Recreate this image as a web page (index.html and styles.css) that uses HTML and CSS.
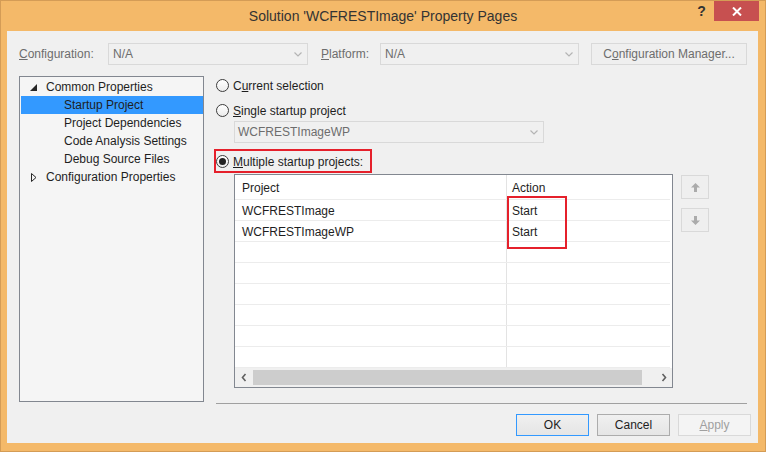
FILE: index.html
```html
<!DOCTYPE html>
<html lang="en">
<head>
    <meta charset="UTF-8">
    <title>Solution 'WCFRESTImage' Property Pages</title>
    <link rel="stylesheet" href="styles.css">
</head>
<body>
    <div class="window">
        <div class="titlebar">
            <div class="title">Solution 'WCFRESTImage' Property Pages</div>
            <div class="caption-buttons">
                <div class="help-btn">?</div>
                <div class="close-btn">
                    <svg width="10" height="9" viewBox="0 0 10 9"><path d="M1 0.5 L9 8.5 M9 0.5 L1 8.5" stroke="#fff" stroke-width="2" fill="none"/></svg>
                </div>
            </div>
        </div>

        <div class="client">
            <div class="config-row">
                <div class="field-label label-config"><u>C</u>onfiguration:</div>
                <div class="combo combo-config">
                    <span>N/A</span>
                    <svg class="chevron" width="8" height="5" viewBox="0 0 8 5"><path d="M0.5 0.5 L4 4 L7.5 0.5" stroke="#b4b4b4" stroke-width="1.2" fill="none"/></svg>
                </div>
                <div class="field-label label-platform"><u>P</u>latform:</div>
                <div class="combo combo-platform">
                    <span>N/A</span>
                    <svg class="chevron" width="8" height="5" viewBox="0 0 8 5"><path d="M0.5 0.5 L4 4 L7.5 0.5" stroke="#b4b4b4" stroke-width="1.2" fill="none"/></svg>
                </div>
                <button type="button" class="btn btn-manager" disabled>C<u>o</u>nfiguration Manager...</button>
            </div>

            <div class="body">
                <div class="tree">
                    <div class="tree-item">
                        <span class="expander">
                            <svg width="7" height="7" viewBox="0 0 7 7"><path d="M7 0 L7 7 L0 7 Z" fill="#262626"/></svg>
                        </span>
                        <span>Common Properties</span>
                    </div>
                    <div class="tree-item child selected">Startup Project</div>
                    <div class="tree-item child">Project Dependencies</div>
                    <div class="tree-item child">Code Analysis Settings</div>
                    <div class="tree-item child">Debug Source Files</div>
                    <div class="tree-item">
                        <span class="expander collapsed">
                            <svg width="6" height="9" viewBox="0 0 6 9"><path d="M0.5 0.5 L5 4.5 L0.5 8.5 Z" fill="none" stroke="#262626"/></svg>
                        </span>
                        <span>Configuration Properties</span>
                    </div>
                </div>

                <div class="page">
                    <div class="radio-row">
                        <span class="radio"></span>
                        <span class="radio-text">C<u>u</u>rrent selection</span>
                    </div>
                    <div class="radio-row second">
                        <span class="radio"></span>
                        <span class="radio-text"><u>S</u>ingle startup project</span>
                    </div>
                    <div class="combo combo-project">
                        <span>WCFRESTImageWP</span>
                        <svg class="chevron" width="8" height="5" viewBox="0 0 8 5"><path d="M0.5 0.5 L4 4 L7.5 0.5" stroke="#b4b4b4" stroke-width="1.2" fill="none"/></svg>
                    </div>
                    <div class="radio-row marked">
                        <span class="radio checked"></span>
                        <span class="radio-text"><u>M</u>ultiple startup projects:</span>
                    </div>

                    <div class="grid-row">
                        <div class="grid">
                            <div class="grid-line grid-header">
                                <div class="cell col-project">Project</div>
                                <div class="cell col-action">Action</div>
                            </div>
                            <div class="grid-line">
                                <div class="cell col-project">WCFRESTImage</div>
                                <div class="cell col-action">Start</div>
                            </div>
                            <div class="grid-line">
                                <div class="cell col-project">WCFRESTImageWP</div>
                                <div class="cell col-action">Start</div>
                            </div>
                            <div class="grid-line"><div class="cell col-project"></div><div class="cell col-action"></div></div>
                            <div class="grid-line"><div class="cell col-project"></div><div class="cell col-action"></div></div>
                            <div class="grid-line"><div class="cell col-project"></div><div class="cell col-action"></div></div>
                            <div class="grid-line"><div class="cell col-project"></div><div class="cell col-action"></div></div>
                            <div class="grid-line"><div class="cell col-project"></div><div class="cell col-action"></div></div>
                            <div class="grid-line"><div class="cell col-project"></div><div class="cell col-action"></div></div>

                            <div class="hscroll">
                                <div class="scroll-arrow">
                                    <svg width="6" height="9" viewBox="0 0 6 9"><path d="M4.5 1 L1.5 4.5 L4.5 8" stroke="#606060" stroke-width="1.6" fill="none"/></svg>
                                </div>
                                <div class="scroll-thumb"></div>
                                <div class="scroll-track"></div>
                                <div class="scroll-arrow">
                                    <svg width="6" height="9" viewBox="0 0 6 9"><path d="M1.5 1 L4.5 4.5 L1.5 8" stroke="#606060" stroke-width="1.6" fill="none"/></svg>
                                </div>
                            </div>

                            <div class="start-mark"></div>
                        </div>

                        <div class="move-buttons">
                            <div class="move-btn">
                                <svg width="9" height="9" viewBox="0 0 9 9"><path d="M4.5 0 L9 4.5 H6 V9 H3 V4.5 H0 Z" fill="#ababab"/></svg>
                            </div>
                            <div class="move-btn">
                                <svg width="9" height="9" viewBox="0 0 9 9"><path d="M4.5 9 L9 4.5 H6 V0 H3 V4.5 H0 Z" fill="#ababab"/></svg>
                            </div>
                        </div>
                    </div>
                </div>
            </div>

            <div class="footer">
                <button type="button" class="btn btn-default">OK</button>
                <button type="button" class="btn">Cancel</button>
                <button type="button" class="btn" disabled><u>A</u>pply</button>
            </div>
        </div>
    </div>
</body>
</html>
```

FILE: styles.css
```css
* {
    box-sizing: border-box;
}

body {
    margin: 0;
    font-family: "Liberation Sans", Arial, sans-serif;
    font-size: 12px;
    color: #1e1e1e;
}

.window {
    width: 766px;
    height: 452px;
    border: 1px solid #d49c56;
    background: #f4b969;
    display: flex;
    flex-direction: column;
}

/* title bar */

.titlebar {
    height: 30px;
    display: flex;
    flex-shrink: 0;
}

.title {
    flex: 1;
    padding-left: 72px;
    text-align: center;
    line-height: 30px;
    font-size: 14px;
    color: #333;
}

.caption-buttons {
    display: flex;
    align-items: flex-start;
    margin-right: 6px;
}

.help-btn {
    width: 21px;
    height: 20px;
    line-height: 20px;
    padding-right: 4px;
    text-align: center;
    font-size: 14px;
    font-weight: bold;
    color: #333;
}

.close-btn {
    width: 45px;
    height: 20px;
    background: #c75050;
    display: flex;
    align-items: center;
    justify-content: center;
}

/* client area */

.client {
    height: 412px;
    margin: 0 7px 0 6px;
    background: #f0f0f0;
    display: flex;
    flex-direction: column;
}

.config-row {
    display: flex;
    align-items: center;
    padding: 12px 0 0 12px;
}

.field-label {
    color: #6d6d6d;
    height: 22px;
    line-height: 22px;
}

.label-config {
    width: 89px;
}

.label-platform {
    width: 59px;
    margin-left: 13px;
}

.combo {
    height: 22px;
    border: 1px solid #d9d9d9;
    background: #f0f0f0;
    color: #6d6d6d;
    display: flex;
    align-items: center;
    justify-content: space-between;
    padding: 0 5px 0 4px;
}

.combo-config {
    width: 200px;
}

.combo-platform {
    width: 199px;
}

.combo-project {
    width: 310px;
    margin: 2px 0 0 18px;
    padding-left: 3px;
}

.btn {
    font-family: inherit;
    font-size: 12px;
    color: #1e1e1e;
    height: 22px;
    width: 73px;
    padding: 0;
    border: 1px solid #acacac;
    background: linear-gradient(#f0f0f0, #e5e5e5);
}

.btn:disabled {
    border-color: #d9d9d9;
    background: #f4f4f4;
    color: #a0a0a0;
}

.btn-manager {
    width: 156px;
    margin-left: 12px;
}

.btn-manager:disabled {
    color: #6d6d6d;
    background: #efefef;
}

.btn-default {
    border-color: #3399ff;
}

/* main body */

.body {
    display: flex;
    align-items: flex-start;
    margin-top: 11px;
    padding-left: 12px;
}

.tree {
    width: 185px;
    height: 326px;
    border: 1px solid #828790;
    background: #f5f5f5;
    padding: 1px 0 0 1px;
}

.tree-item {
    height: 18px;
    display: flex;
    align-items: center;
    white-space: nowrap;
}

.tree-item.child {
    padding-left: 43px;
}

.tree-item.selected {
    background: #3399ff;
}

.expander {
    width: 25px;
    padding-left: 9px;
    display: flex;
    align-items: center;
}

.expander.collapsed {
    padding-left: 10px;
}

.page {
    width: 531px;
    height: 328px;
    margin-left: 12px;
    border-bottom: 1px solid #a0a0a0;
}

.radio-row {
    height: 18px;
    display: flex;
    align-items: center;
    white-space: nowrap;
}

.radio-text {
    padding-top: 1px;
}

.radio-row.second {
    margin-top: 7px;
}

.radio-row.marked {
    width: 154px;
    height: 20px;
    margin-top: 8px;
    outline: 2px solid #e5202b;
}

.radio {
    width: 13px;
    height: 13px;
    border: 1px solid #3c3c3c;
    border-radius: 50%;
    background: linear-gradient(#ffffff, #ececec);
    margin-right: 4px;
    display: flex;
    align-items: center;
    justify-content: center;
}

.radio.checked::after {
    content: "";
    width: 7px;
    height: 7px;
    border-radius: 50%;
    background: #212121;
}

/* project grid */

.grid-row {
    display: flex;
    gap: 8px;
    margin: 3px 0 0 18px;
}

.grid {
    width: 439px;
    height: 214px;
    border: 1px solid #828790;
    background: #fff;
    position: relative;
    display: flex;
    flex-direction: column;
}

.grid-line {
    height: 21px;
    display: flex;
    border-bottom: 1px solid #ececec;
    margin-right: 2px;
}

.grid-line.grid-header {
    height: 25px;
}

.cell {
    display: flex;
    align-items: center;
    white-space: nowrap;
    padding-top: 2px;
}

.grid-header .cell {
    padding-top: 1px;
}

.col-project {
    width: 272px;
    padding-left: 7px;
    border-right: 1px solid #e3e3e3;
}

.col-action {
    flex: 1;
    padding-left: 5px;
}

.hscroll {
    height: 19px;
    display: flex;
    align-items: center;
    background: #f0f0f0;
}

.scroll-arrow {
    width: 17px;
    height: 19px;
    display: flex;
    align-items: center;
    justify-content: center;
}

.scroll-thumb {
    width: 389px;
    height: 15px;
    margin-left: 1px;
    background: #cdcdcd;
}

.scroll-track {
    flex: 1;
}

.start-mark {
    position: absolute;
    left: 272px;
    top: 21px;
    width: 60px;
    height: 53px;
    border: 2px solid #e5202b;
}

.move-buttons {
    display: flex;
    flex-direction: column;
    gap: 9px;
    margin-top: 1px;
}

.move-btn {
    width: 28px;
    height: 24px;
    border: 1px solid #d9d9d9;
    background: #efefef;
    display: flex;
    align-items: center;
    justify-content: center;
}

/* footer */

.footer {
    display: flex;
    justify-content: flex-end;
    gap: 8px;
    margin-top: 10px;
    padding-right: 7px;
}
```
